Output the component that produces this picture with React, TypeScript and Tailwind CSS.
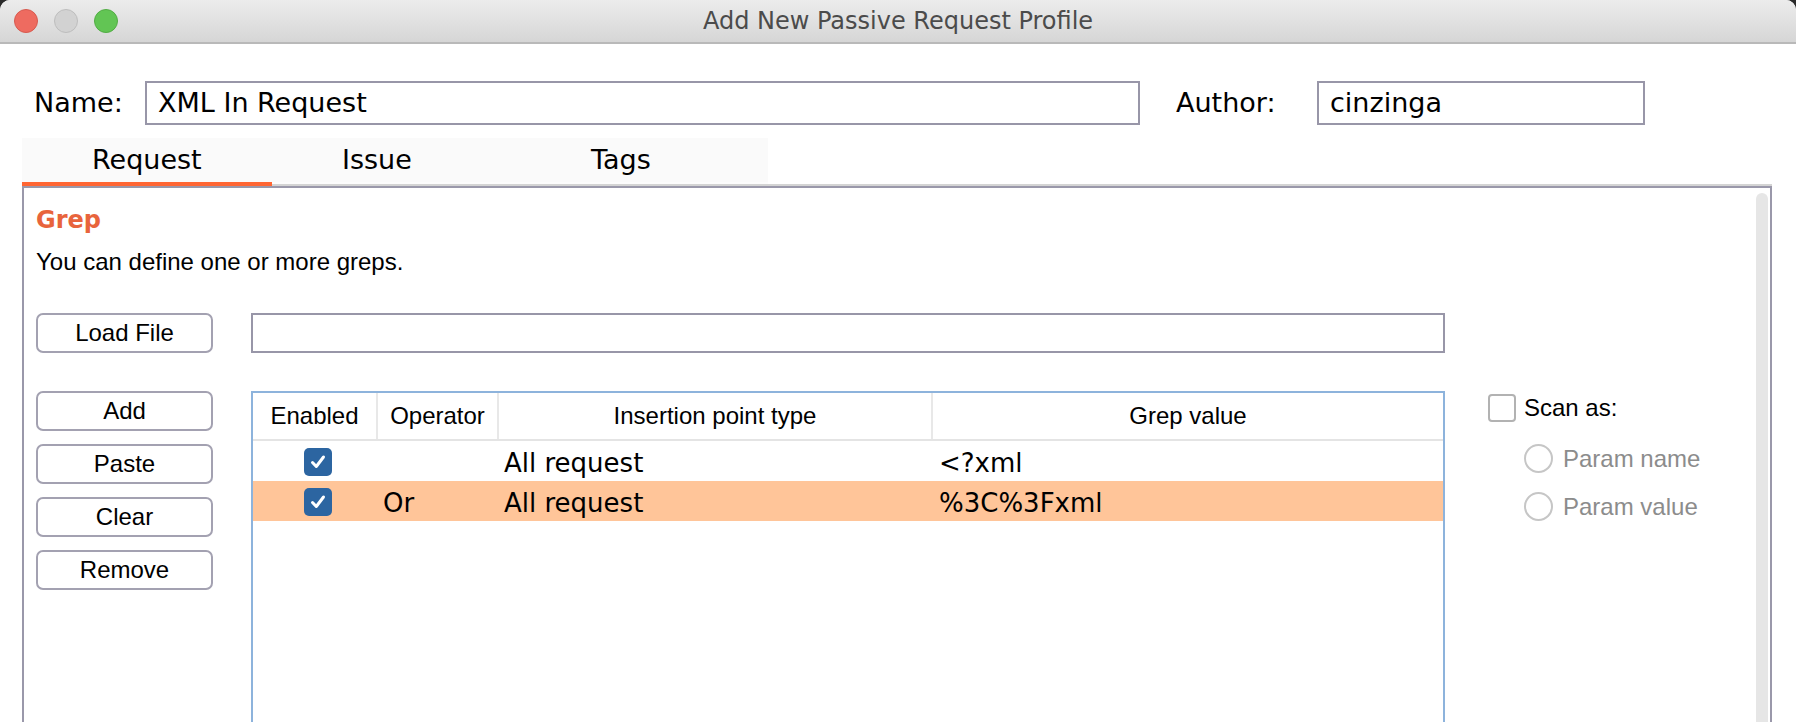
import { JSX } from 'react'

const lucida = "font-['DejaVu_Sans',sans-serif]"
const helv = "font-['Liberation_Sans',Arial,sans-serif]"

function TrafficLights(): JSX.Element {
  return (
    <div className="flex items-center gap-[16px] pl-[14px]">
      <span className="w-[24px] h-[24px] rounded-full bg-[#ee6b60] border border-[#d65a4f]" />
      <span className="w-[24px] h-[24px] rounded-full bg-[#d2d2d2] border border-[#bdbdbd]" />
      <span className="w-[24px] h-[24px] rounded-full bg-[#62c554] border border-[#52ac45]" />
    </div>
  )
}

function Tab({ label, width, selected }: { label: string; width: string; selected?: boolean }): JSX.Element {
  return (
    <div className={`${width} flex flex-col`}>
      <div className={`h-[44px] bg-[#fafafa] flex items-center pl-[70px] text-[27px] text-black ${lucida}`}>
        {label}
      </div>
      {selected ? (
        <div className="h-[4px] bg-[#ff6633]" />
      ) : (
        <div className="h-[4px] bg-[#fcfcfc] border-b-2 border-[#d4d4d4]" />
      )}
    </div>
  )
}

function Button({ label }: { label: string }): JSX.Element {
  return (
    <div className={`w-[177px] h-[40px] rounded-[7px] border-2 border-[#a3a1b1] bg-white flex items-center justify-center text-[24px] text-black ${helv}`}>
      {label}
    </div>
  )
}

function Check(): JSX.Element {
  return (
    <div className="w-[28px] h-[28px] rounded-[5px] bg-[#2c65a1] flex items-center justify-center">
      <svg width="20" height="20" viewBox="0 0 20 20">
        <path d="M4.5 10.5 L8.3 14.5 L15.5 5" fill="none" stroke="white" strokeWidth="3" strokeLinecap="round" strokeLinejoin="round" />
      </svg>
    </div>
  )
}

const rows = [
  { op: '', type: 'All request', value: '<?xml', selected: false },
  { op: 'Or', type: 'All request', value: '%3C%3Fxml', selected: true },
]

export default function App(): JSX.Element {
  return (
    <div className="w-[1796px] h-[722px] overflow-hidden bg-[#2b2b2b]">
      <div className="h-full rounded-t-[10px] overflow-hidden bg-white flex flex-col">
        {/* Title bar */}
        <div className="h-[44px] shrink-0 grid grid-cols-[1fr_auto_1fr] items-center bg-gradient-to-b from-[#ececec] to-[#d6d6d6] border-b-2 border-[#b9b9b9]">
          <TrafficLights />
          <div className={`text-[24px] text-[#4b4b4b] ${lucida}`}>Add New Passive Request Profile</div>
          <div />
        </div>

        {/* Name / Author */}
        <div className={`mt-[37px] h-[44px] shrink-0 flex items-center text-[27px] text-black ${lucida}`}>
          <div className="w-[145px] pl-[34px]">Name:</div>
          <div className="w-[995px] h-[44px] border-2 border-[#9896a8] flex items-center pl-[11px]">XML In Request</div>
          <div className="w-[177px] pl-[36px]">Author:</div>
          <div className="w-[328px] h-[44px] border-2 border-[#9896a8] flex items-center pl-[11px]">cinzinga</div>
        </div>

        {/* Tabs */}
        <div className="mt-[13px] ml-[22px] w-[1750px] shrink-0 flex">
          <Tab label="Request" width="w-[250px]" selected />
          <Tab label="Issue" width="w-[249px]" />
          <Tab label="Tags" width="w-[247px]" />
          <div className="flex-1 flex flex-col">
            <div className="h-[44px]" />
            <div className="h-[4px] border-b-2 border-[#d4d4d4]" />
          </div>
        </div>

        {/* Panel */}
        <div className="ml-[22px] w-[1750px] flex-1 border-2 border-b-0 border-[#9a98aa] flex">
          <div className="flex-1 flex flex-col">
            <div className={`mt-[17px] h-[30px] pl-[12px] flex items-center text-[24px] font-bold text-[#e8643c] ${lucida}`}>Grep</div>
            <div className={`mt-[13px] h-[28px] pl-[12px] flex items-center text-[24px] text-black ${helv}`}>
              You can define one or more greps.
            </div>

            <div className="mt-[37px] pl-[12px] flex items-center">
              <Button label="Load File" />
              <div className="ml-[38px] w-[1194px] h-[40px] border-2 border-[#9896a8]" />
            </div>

            <div className="mt-[38px] pl-[12px] flex items-start">
              <div className="w-[177px] flex flex-col gap-[13px]">
                <Button label="Add" />
                <Button label="Paste" />
                <Button label="Clear" />
                <Button label="Remove" />
              </div>

              {/* Grep table */}
              <div className="ml-[38px] w-[1194px] h-[420px] border-2 border-[#8db3dc] bg-white">
                <div className={`grid grid-cols-[125px_121px_434px_1fr] h-[48px] border-b-2 border-[#e4e4e4] text-[24px] text-black ${helv}`}>
                  <div className="border-r-2 border-[#e8e8e8] flex items-center justify-center">Enabled</div>
                  <div className="border-r-2 border-[#e8e8e8] flex items-center justify-center">Operator</div>
                  <div className="border-r-2 border-[#e8e8e8] flex items-center justify-center">Insertion point type</div>
                  <div className="flex items-center justify-center">Grep value</div>
                </div>
                {rows.map((r, i) => (
                  <div
                    key={i}
                    className={`grid grid-cols-[125px_121px_434px_1fr] h-[40px] text-[26px] text-black ${lucida} ${r.selected ? 'bg-[#ffc599]' : ''}`}
                  >
                    <div className="flex items-center justify-center pl-[5px]">
                      <Check />
                    </div>
                    <div className="flex items-center pl-[5px] pt-[3px]">{r.op}</div>
                    <div className="flex items-center pl-[5px] pt-[3px]">{r.type}</div>
                    <div className="flex items-center pl-[6px] pt-[3px]">{r.value}</div>
                  </div>
                ))}
              </div>

              {/* Scan as */}
              <div className={`ml-[43px] flex flex-col text-[24px] ${helv}`}>
                <div className="mt-[3px] h-[28px] flex items-center gap-[8px] text-black">
                  <span className="w-[28px] h-[28px] rounded-[4px] border-2 border-[#b2b2b2] bg-white" />
                  Scan as:
                </div>
                <div className="mt-[22px] ml-[36px] h-[29px] flex items-center gap-[10px] text-[#8c8c8c]">
                  <span className="w-[29px] h-[29px] rounded-full border-2 border-[#c6c6c6] bg-white" />
                  Param name
                </div>
                <div className="mt-[19px] ml-[36px] h-[29px] flex items-center gap-[10px] text-[#8c8c8c]">
                  <span className="w-[29px] h-[29px] rounded-full border-2 border-[#c6c6c6] bg-white" />
                  Param value
                </div>
              </div>
            </div>
          </div>

          {/* Scrollbar track */}
          <div className="mt-[5px] mr-[2px] w-[12px] rounded-t-full bg-[#e6e6e6]" />
        </div>
      </div>
    </div>
  )
}
